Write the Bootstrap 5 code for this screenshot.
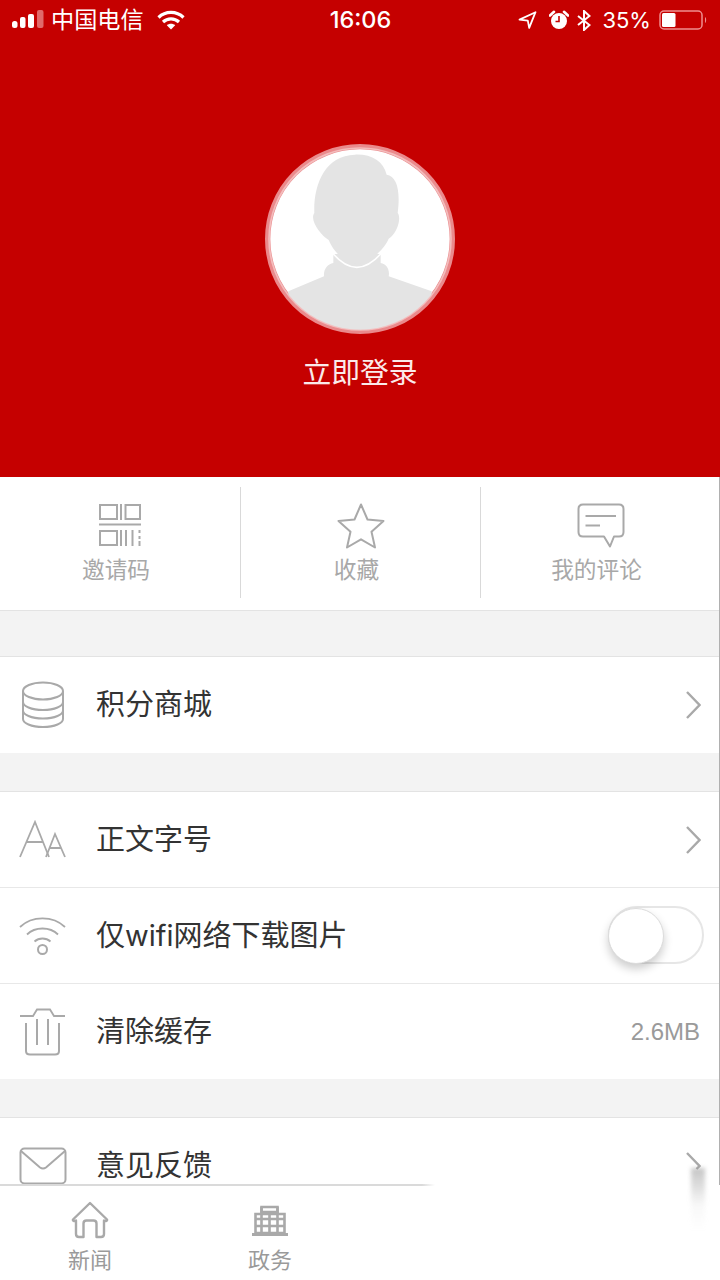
<!DOCTYPE html>
<html lang="zh-CN">
<head>
  <meta charset="UTF-8">
  <title>我的</title>
  <meta name="viewport" content="width=device-width, initial-scale=1">
  <link href="https://cdn.jsdelivr.net/npm/bootstrap@5.3.3/dist/css/bootstrap.min.css" rel="stylesheet">
  <style>
    html, body { height: 1280px; overflow: hidden; }
    body {
      background: #f3f3f3;
      font-family: "Liberation Sans", "Noto Sans CJK SC", sans-serif;
      color: #333;
    }
    .page-main { height: 1185px; overflow: hidden; }

    .hero { height: 477px; background: #c50000; color: #fff; }
    .status-bar { height: 40px; padding: 0 13px 0 12px; font-size: 23px; line-height: 40px; }
    .status-left, .status-right { width: 310px; }
    .status-time { font-family: Inter, "Liberation Sans", sans-serif; font-weight: 500; width: 76px; text-align: center; margin-left: 2px; font-size: 23.5px; }
    .carrier { margin: 0 13px 0 7px; font-size: 23.2px; }
    .percent { font-family: Inter, "Liberation Sans", sans-serif; font-size: 22px; margin: 0 8px 0 11px; }
    .avatar-ring { width: 190px; height: 190px; margin-top: 104px; display: block; }
    .login-text { font-size: 28.8px; line-height: 40px; margin-top: 19px; color: #fbeaea; }

    .lower-part { position: relative; }
    .lower-part::after {
      content: ""; position: absolute; right: 0; top: 0; bottom: 17px; width: 1px; background: #b0b0b0;
    }
    .quick-row { height: 134px; background: #fff; border-bottom: 1px solid #e3e3e3; padding-top: 10px; }
    .quick-cell { height: 111px; padding-top: 16px; }
    .quick-cell.with-line { border-left: 1px solid #d9d9d9; }
    .quick-cell svg { display: block; margin: 0 auto; }
    .quick-label { font-size: 22.7px; line-height: 30px; color: #a8a8a8; padding-right: 8px; margin-top: 5px; }
    .quick-top { height: 47px; }

    .gap-a { height: 45px; }
    .gap-b { height: 38px; }
    .gap-c { height: 38px; }
    .menu-group { border-top: 1px solid #e3e3e3; background: #fff; border-radius: 0; }
    .menu-row {
      height: 96px; padding: 0 19px 0 19px; font-size: 29px; color: #333;
      font-family: Inter, "Noto Sans CJK SC", sans-serif;
      border-color: #e8e8e8; border-bottom-width: 1px;
    }
    .menu-row.short-row { height: 95px; }
    .menu-icon { width: 78px; flex: none; margin-right: -1px; }
    .menu-icon svg { display: block; }
    .chevron { display: block; }
    .cache-size { font-family: "Liberation Sans", sans-serif; font-size: 24px; color: #9a9a9a; margin-right: 1px; }

    .switch-track {
      width: 96px; height: 58px; border: 2px solid #e6e6e6; border-radius: 29px;
      background: #fff; position: relative; margin: 0 -3px 2px 0;
    }
    .switch-knob {
      position: absolute; left: -2px; top: 0; width: 56px; height: 56px; border-radius: 50%;
      background: #fff; border: 1px solid #dcdcdc; box-shadow: 0 5px 10px rgba(0,0,0,.2);
    }

    .tab-bar { height: 95px; background: #fff; position: relative; }
    .tab-bar::before {
      content: ""; position: absolute; left: 0; top: -1px; width: 435px; height: 2px;
      background: linear-gradient(to right, #dadada 97%, rgba(218,218,218,0));
    }
    .tab-bar::after {
      content: ""; position: absolute; left: 691px; top: -17px; width: 14px; height: 62px;
      background: linear-gradient(to bottom, rgba(150,150,150,.55), rgba(200,200,200,.12) 60%, rgba(255,255,255,0));
      filter: blur(2px);
    }
    .tab-item { height: 95px; padding-top: 16px; text-align: center; }
    .tab-item svg { display: block; margin: 0 auto; }
    .tab-top { height: 44px; }
    .tab-top.building-top { padding-top: 4px; }
    .tab-label { font-size: 22px; line-height: 30px; color: #9a9a9a; margin-top: 1px; }
  </style>
</head>
<body>
<div class="page-main">
  <div class="hero">
    <div class="status-bar d-flex align-items-center">
      <div class="status-left d-flex align-items-center">
        <svg width="32" height="20" viewBox="0 0 32 20">
          <rect x="0" y="11" width="5.5" height="7" rx="2.5" fill="#fff"/>
          <rect x="8" y="7" width="5.5" height="11" rx="2" fill="#fff"/>
          <rect x="16" y="4" width="6" height="14" rx="2" fill="#fff"/>
          <rect x="25" y="0" width="6.5" height="18" rx="2" fill="#e06a6a"/>
        </svg>
        <span class="carrier">中国电信</span>
        <svg width="28" height="20" viewBox="0 0 28 20" fill="none" stroke="#fff" stroke-width="3.2">
          <path d="M1.5 7.5C8.5 .7 19.5 .7 26.5 7.5"/>
          <path d="M6 12C10.5 7.8 17.5 7.8 22 12"/>
          <path d="M14 19.5 9.8 15.2C12 13.2 16 13.2 18.2 15.2Z" fill="#fff" stroke="none"/>
        </svg>
      </div>
      <div class="status-time">16:06</div>
      <div class="status-right d-flex align-items-center justify-content-end">
        <svg width="19" height="18" viewBox="0 0 19 18" fill="none" stroke="#fff" stroke-width="1.8" stroke-linejoin="round" class="me-2">
          <path d="M1.5 8.6 17.5 1.2 11.2 16.800 9.8 9.6Z"/>
        </svg>
        <svg width="20" height="20" viewBox="0 0 20 20" class="ms-1">
          <circle cx="10" cy="11" r="8" fill="#fff"/>
          <path d="M10 6v5.5H6.5" fill="none" stroke="#c50000" stroke-width="1.6"/>
          <path d="M1 5.5 5 1.8M19 5.5 15 1.8" stroke="#fff" stroke-width="2.6" stroke-linecap="round"/>
        </svg>
        <svg width="14" height="21" viewBox="0 0 14 21" fill="none" stroke="#fff" stroke-width="2" class="status-bt ms-2">
          <path d="M1 6 12.5 15 7 20V1l5.5 5L1 15"/>
        </svg>
        <span class="percent">35%</span>
        <svg width="48" height="20" viewBox="0 0 48 20">
          <rect x="1" y="1" width="42" height="18" rx="4" fill="none" stroke="#ee8e8e" stroke-width="1.5"/>
          <rect x="3" y="3" width="13.5" height="14" rx="1.5" fill="#fff"/>
          <path d="M46 7c1.5.5 1.5 5.500 0 6z" fill="#ee8e8e"/>
        </svg>
      </div>
    </div>
    <div class="d-flex flex-column align-items-center">
      <svg class="avatar-ring" viewBox="45 28 570 570">
        <defs><clipPath id="faceClip"><circle cx="330" cy="313" r="272"/></clipPath></defs>
        <circle cx="330" cy="313" r="277" fill="#fff" stroke="#ea8a8c" stroke-width="16"/>
        <circle cx="330" cy="313" r="273" fill="none" stroke="#f4bcbc" stroke-width="5"/>
        <g clip-path="url(#faceClip)">
          <path d="M250 358V385C232 388 220 405 222 425L115 470V600H545V470L416 425C420 405 410 388 392 385V358Z" fill="#e4e4e4"/>
        </g>
        <path d="M250 358Q320 438 392 358" fill="none" stroke="#fff" stroke-width="5"/>
        <path d="M193 235C190 150 225 62 315 60C365 58 400 80 410 120C440 125 452 165 443 235C455 250 442 295 416 312C402 345 355 388 320 388C285 388 250 350 236 316C210 300 178 255 193 235Z" fill="#e4e4e4"/>
      </svg>
      <div class="login-text">立即登录</div>
    </div>
  </div>

  <div class="lower-part">
    <div class="quick-row row g-0">
      <div class="col-4 quick-cell text-center">
        <div class="quick-top">
          <svg width="44" height="44" viewBox="0 0 44 44" fill="none" stroke="#a9a9a9" stroke-width="2" class="qr-icon">
            <rect x="2" y="2" width="17" height="14"/>
            <path d="M23 1v16"/>
            <rect x="27.500" y="2" width="14.500" height="14"/>
            <path d="M1 21.500H43" stroke-width="2.200"/>
            <rect x="2" y="28" width="17" height="14"/>
            <path d="M23 27v16M28 27v16M34.500 27v16M41.500 27v3M41.500 33v3M41.500 38v5"/>
          </svg>
        </div>
        <div class="quick-label">邀请码</div>
      </div>
      <div class="col-4 quick-cell with-line text-center">
        <div class="quick-top">
          <svg width="48" height="46" viewBox="0 0 48 46" fill="none" stroke="#a9a9a9" stroke-width="2" stroke-linejoin="round">
            <path d="M24 1.500 30.500 16.500 46.500 18 34.500 28.700 38 44.500 24 36.300 10 44.500 13.500 28.700 1.500 18 17.500 16.500Z"/>
          </svg>
        </div>
        <div class="quick-label">收藏</div>
      </div>
      <div class="col-4 quick-cell with-line text-center">
        <div class="quick-top">
          <svg width="48" height="46" viewBox="0 0 48 46" fill="none" stroke="#a9a9a9" stroke-width="2" stroke-linejoin="round">
            <path d="M6 1.500H42Q46.500 1.500 46.500 6V29Q46.500 33.500 42 33.500H37L33 43.500 27 33.500H6Q1.500 33.500 1.500 29V6Q1.500 1.500 6 1.500Z"/>
            <path d="M8.500 13H39M8.500 22.500H23"/>
          </svg>
        </div>
        <div class="quick-label">我的评论</div>
      </div>
    </div>

    <div class="gap-a"></div>
    <div class="list-group list-group-flush menu-group">
      <div class="list-group-item menu-row d-flex align-items-center">
        <div class="menu-icon">
          <svg width="48" height="48" viewBox="0 0 48 48" fill="none" stroke="#a9a9a9" stroke-width="2">
            <ellipse cx="24" cy="10" rx="20" ry="8.500"/>
            <path d="M4 10V38C4 42 12 46 24 46S44 42 44 38V10"/>
            <path d="M4 21C4 25 12 29 24 29S44 25 44 21M4 29.500C4 33.500 12 37.500 24 37.500S44 33.500 44 29.500"/>
          </svg>
        </div>
        <div class="flex-grow-1">积分商城</div>
        <svg class="chevron" width="16" height="30" viewBox="0 0 16 30" fill="none" stroke="#a9a9a9" stroke-width="2.400"><path d="M2 2 14.500 15 2 28"/></svg>
      </div>
    </div>

    <div class="gap-b"></div>
    <div class="list-group list-group-flush menu-group">
      <div class="list-group-item menu-row d-flex align-items-center">
        <div class="menu-icon">
          <svg width="48" height="40" viewBox="0 0 48 40" fill="none" stroke="#a9a9a9" stroke-width="1.800">
            <path d="M1 37 16 2 30 37M7.500 22H24"/>
            <path d="M27 37 36 14 46 37M31 28H42"/>
          </svg>
        </div>
        <div class="flex-grow-1">正文字号</div>
        <svg class="chevron" width="16" height="30" viewBox="0 0 16 30" fill="none" stroke="#a9a9a9" stroke-width="2.400"><path d="M2 2 14.500 15 2 28"/></svg>
      </div>
      <div class="list-group-item menu-row d-flex align-items-center">
        <div class="menu-icon">
          <svg width="48" height="40" viewBox="0 0 48 40" fill="none" stroke="#a9a9a9" stroke-width="1.800">
            <path d="M1 11C13-.5 34-.5 46 11"/>
            <path d="M8 18.500C16 10.500 31 10.500 39 18.500"/>
            <path d="M15.500 25.500C20 21.500 27 21.500 31.500 25.500"/>
            <circle cx="23.500" cy="33.500" r="4.500" stroke-width="2"/>
          </svg>
        </div>
        <div class="flex-grow-1">仅wifi网络下载图片</div>
        <div class="switch-track"><div class="switch-knob"></div></div>
      </div>
      <div class="list-group-item menu-row short-row d-flex align-items-center">
        <div class="menu-icon">
          <svg width="48" height="50" viewBox="0 0 48 50" fill="none" stroke="#a9a9a9" stroke-width="2">
            <path d="M1 9H14L18 2.500H31L35 9H46" stroke-width="1.800"/>
            <path d="M7 16V44Q7 47.500 11 47.500H36Q40 47.500 40 44V16"/>
            <path d="M18 12V38M29 12V38"/>
          </svg>
        </div>
        <div class="flex-grow-1">清除缓存</div>
        <div class="cache-size">2.6MB</div>
      </div>
    </div>

    <div class="gap-c"></div>
    <div class="list-group list-group-flush menu-group">
      <div class="list-group-item menu-row d-flex align-items-center">
        <div class="menu-icon">
          <svg width="48" height="38" viewBox="0 0 48 38" fill="none" stroke="#a9a9a9" stroke-width="2">
            <rect x="1.500" y="1.500" width="45" height="35" rx="4"/>
            <path d="M2 4 21 20.500Q24 22.500 27 20.500L46 4"/>
          </svg>
        </div>
        <div class="flex-grow-1">意见反馈</div>
        <svg class="chevron" width="16" height="30" viewBox="0 0 16 30" fill="none" stroke="#a9a9a9" stroke-width="2.400"><path d="M2 2 14.500 15 11.500 18"/></svg>
      </div>
    </div>
  </div>
</div>

<div class="tab-bar row g-0">
  <div class="col-3 tab-item">
    <div class="tab-top">
      <svg width="38" height="38" viewBox="0 0 38 38" fill="none" stroke="#a9a9a9" stroke-width="2.400" stroke-linejoin="round">
        <path d="M2 18.500 19 2 36 18.500C36.500 19.800 35 20.500 33 19.500V33Q33 36 30 36H25.500V22.500Q25.500 19.500 22.500 19.500H15.500Q12.500 19.500 12.500 22.500V36H8Q5 36 5 33V19.500C3 20.500 1.500 19.800 2 18.500Z"/>
      </svg>
    </div>
    <div class="tab-label">新闻</div>
  </div>
  <div class="col-3 tab-item">
    <div class="tab-top building-top">
      <svg width="36" height="32" viewBox="0 0 36 32" fill="none" stroke="#a9a9a9" stroke-width="2.600">
        <path d="M9.500 2H25.500V9H32.500V28H3.500V9H9.500Z"/>
        <path d="M9.500 2V28M25.500 2V28M9.500 7H25.500M3.500 14H32.500M3.500 21H32.500M17.500 9V28M9.500 9H25.500"/>
        <path d="M0 29.500H36" stroke-width="3"/>
      </svg>
    </div>
    <div class="tab-label">政务</div>
  </div>
</div>
<script src="https://cdn.jsdelivr.net/npm/bootstrap@5.3.3/dist/js/bootstrap.bundle.min.js"></script>
</body>
</html>
